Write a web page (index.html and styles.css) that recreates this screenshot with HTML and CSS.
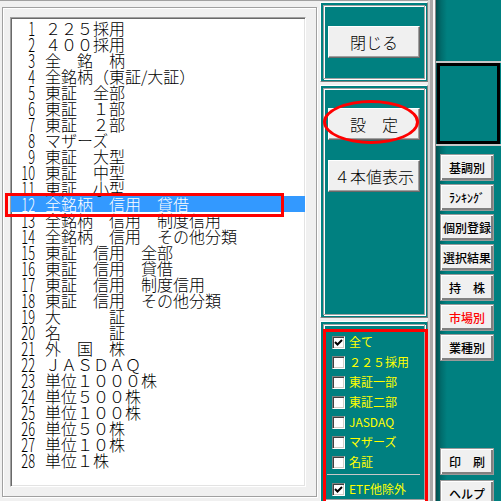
FILE: index.html
```html
<!DOCTYPE html>
<html lang="ja">
<head>
<meta charset="utf-8">
<link rel="stylesheet" href="styles.css">
</head>
<body>
<div class="window">
  <div class="left">
    <div class="frame">
      <ul class="list">
        <li><span class="n">1</span><span class="t">２２５採用</span></li>
        <li><span class="n">2</span><span class="t">４００採用</span></li>
        <li><span class="n">3</span><span class="t">全　銘　柄</span></li>
        <li><span class="n">4</span><span class="t">全銘柄（東証/大証）</span></li>
        <li><span class="n">5</span><span class="t">東証　全部</span></li>
        <li><span class="n">6</span><span class="t">東証　１部</span></li>
        <li><span class="n">7</span><span class="t">東証　２部</span></li>
        <li><span class="n">8</span><span class="t">マザーズ</span></li>
        <li><span class="n">9</span><span class="t">東証　大型</span></li>
        <li><span class="n">10</span><span class="t">東証　中型</span></li>
        <li><span class="n">11</span><span class="t">東証　小型</span></li>
        <li class="sel"><span class="n">12</span><span class="t">全銘柄　信用　貸借</span></li>
        <li><span class="n">13</span><span class="t">全銘柄　信用　制度信用</span></li>
        <li><span class="n">14</span><span class="t">全銘柄　信用　その他分類</span></li>
        <li><span class="n">15</span><span class="t">東証　信用　全部</span></li>
        <li><span class="n">16</span><span class="t">東証　信用　貸借</span></li>
        <li><span class="n">17</span><span class="t">東証　信用　制度信用</span></li>
        <li><span class="n">18</span><span class="t">東証　信用　その他分類</span></li>
        <li><span class="n">19</span><span class="t">大　　　証</span></li>
        <li><span class="n">20</span><span class="t">名　　　証</span></li>
        <li><span class="n">21</span><span class="t">外　国　株</span></li>
        <li><span class="n">22</span><span class="t">ＪＡＳＤＡＱ</span></li>
        <li><span class="n">23</span><span class="t">単位１０００株</span></li>
        <li><span class="n">24</span><span class="t">単位５００株</span></li>
        <li><span class="n">25</span><span class="t">単位１００株</span></li>
        <li><span class="n">26</span><span class="t">単位５０株</span></li>
        <li><span class="n">27</span><span class="t">単位１０株</span></li>
        <li><span class="n">28</span><span class="t">単位１株</span></li>
      </ul>
    </div>
  </div>

  <div class="mid">
    <div class="group g1">
      <div class="etch">
        <button class="btn b-close">閉じる</button>
      </div>
    </div>
    <div class="group g2">
      <div class="etch">
        <button class="btn b-set">設　定</button>
        <button class="btn b-four">４本値表示</button>
      </div>
    </div>
    <div class="group g3">
      <div class="etch">
        <div class="checks">
          <label class="chk"><span class="box on"><svg viewBox="0 0 11 11" width="11" height="11"><path d="M2 5 L4.5 7.5 L9 3" fill="none" stroke="#000" stroke-width="2"/></svg></span>全て</label>
          <label class="chk"><span class="box"></span>２２５採用</label>
          <label class="chk"><span class="box"></span>東証一部</label>
          <label class="chk"><span class="box"></span>東証二部</label>
          <label class="chk"><span class="box"></span>JASDAQ</label>
          <label class="chk"><span class="box"></span>マザーズ</label>
          <label class="chk"><span class="box"></span>名証</label>
          <div class="sep"></div>
          <label class="chk"><span class="box on"><svg viewBox="0 0 11 11" width="11" height="11"><path d="M2 5 L4.5 7.5 L9 3" fill="none" stroke="#000" stroke-width="2"/></svg></span>ETF他除外</label>
        </div>
      </div>
    </div>
  </div>

  <div class="divider"></div>

  <div class="right">
    <div class="r-top"></div>
    <div class="r-line"></div>
    <div class="r-box"></div>
    <div class="r-line"></div>
    <div class="sbtns">
      <button class="sbtn first">基調別</button>
      <button class="sbtn">ﾗﾝｷﾝｸﾞ</button>
      <button class="sbtn">個別登録</button>
      <button class="sbtn">選択結果</button>
      <button class="sbtn">持　株</button>
      <button class="sbtn red">市場別</button>
      <button class="sbtn">業種別</button>
      <button class="sbtn print">印　刷</button>
      <button class="sbtn help">ヘルプ</button>
    </div>
  </div>

  <div class="mark mark-row"></div>
  <div class="mark mark-oval"></div>
</div>
</body>
</html>
```

FILE: styles.css
```css
* {
  box-sizing: border-box;
  margin: 0;
  padding: 0;
}

html, body {
  width: 501px;
  height: 501px;
  overflow: hidden;
}

body {
  background: #f0f0f0;
  font-family: "Noto Sans CJK JP", sans-serif;
}

.window {
  position: relative;
  display: flex;
  width: 501px;
  height: 501px;
  overflow: hidden;
}

/* ---------- left list panel ---------- */
.left {
  width: 320px;
  flex: none;
  border-top: 1px solid #a0a0a0;
  padding: 6px 0 0 2px;
  background: #f0f0f0;
}

.frame {
  width: 315px;
  height: 490px;
  border: 1px solid #a0a0a0;
  box-shadow: inset 1px 1px 0 #fff, 1px 1px 0 #fff;
  padding: 9px 0 0 7px;
}

.list {
  list-style: none;
  width: 296px;
  height: 470px;
  background: #fff;
  border-style: solid;
  border-width: 1px;
  border-color: #a0a0a0 #fff #fff #a0a0a0;
  box-shadow: inset 1px 1px 0 #696969, inset -1px -1px 0 #e3e3e3;
  padding-top: 2px;
  font-size: 16px;
  font-weight: 300;
  line-height: 16px;
  color: #000;
}

.list li {
  display: flex;
  height: 16px;
  white-space: pre;
}

.list li.sel {
  background: #3399ff;
  color: #fff;
}

.n {
  display: inline-block;
  width: 24px;
  text-align: right;
  transform: scale(0.8, 1.15);
  transform-origin: right center;
}

.t {
  margin-left: 10px;
}

/* ---------- middle teal panel ---------- */
.mid {
  width: 108px;
  flex: none;
  border-top: 1px solid #a0a0a0;
  padding-top: 1px;
  display: flex;
  flex-direction: column;
  gap: 3px;
  background: #f0f0f0;
}

.group {
  background: #008080;
  border: 1px solid;
  border-color: #fff #808080 #808080 #fff;
  padding: 2px;
}

.g1 { height: 80px; flex: none; }
.g2 { height: 233px; flex: none; }
.g3 { flex: 1; }

.etch {
  height: 100%;
  border: 1px solid #a0a0a0;
  box-shadow: inset 1px 1px 0 #fff, 1px 1px 0 #fff;
}

.btn {
  display: block;
  width: 92px;
  height: 32px;
  margin-left: 4px;
  background: #f0f0f0;
  border: 1px solid;
  border-color: #fff #696969 #696969 #fff;
  box-shadow: inset -1px -1px 0 #a0a0a0;
  font-family: "Noto Sans CJK JP", sans-serif;
  font-size: 16px;
  font-weight: 300;
  line-height: 28px;
  color: #000;
  white-space: pre;
}

.b-close { margin-top: 20px; }
.b-set { margin-top: 19px; }
.b-four { margin-top: 20px; }

.checks {
  padding: 7px 0 0 8px;
}

.chk {
  display: flex;
  align-items: center;
  gap: 4px;
  height: 20px;
  color: #ffff00;
  font-size: 12px;
  line-height: 14px;
}

.box {
  display: flex;
  align-items: center;
  justify-content: center;
  width: 13px;
  height: 13px;
  flex: none;
  background: #fff;
  border: 1px solid;
  border-color: #808080 #fff #fff #808080;
  box-shadow: inset 1px 1px 0 #404040, inset -1px -1px 0 #d4d0c8;
}

.sep {
  height: 1px;
  margin: 2px 4px 4px -5px;
  background: #c8c8c8;
}

/* ---------- divider ---------- */
.divider {
  width: 8px;
  flex: none;
  background: linear-gradient(to right, #d4d4d4 0 2px, #a8a8a8 2px 5px, #f8f8f8 5px 7px, #8a8a8a 7px 8px);
}

/* ---------- right column ---------- */
.right {
  width: 65px;
  flex: none;
  display: flex;
  flex-direction: column;
  background: linear-gradient(to right, #005050 0, #006c6c 5px, #008080 11px);
}

.r-top { height: 61px; flex: none; }

.r-line {
  height: 2px;
  flex: none;
  background: #c8c8c8;
}

.r-box {
  width: 63px;
  height: 81px;
  flex: none;
  margin-left: 1px;
  border: 3px solid #000;
  background: #008080;
}

.sbtns {
  display: flex;
  flex-direction: column;
  padding-top: 5px;
}

.sbtn {
  width: 54px;
  height: 27px;
  flex: none;
  margin: 3px 0 0 4px;
  background: #f0f0f0;
  border: 1px solid #9a9a9a;
  box-shadow: inset 1px 1px 0 #fff, inset -2px -2px 0 #808080;
  font-family: "Noto Sans CJK JP", sans-serif;
  font-size: 12px;
  font-weight: 500;
  line-height: 22px;
  color: #000;
  white-space: pre;
}

.sbtn.red { color: #ff0000; }
.sbtn.print { margin-top: 87px; }
.sbtn.help { margin-top: 5px; }

/* ---------- red annotations ---------- */
.mark {
  position: absolute;
  border: 3px solid #ff0000;
  pointer-events: none;
}

.mark-row {
  left: 5px;
  top: 193px;
  width: 279px;
  height: 24px;
}

.mark-oval {
  left: 323px;
  top: 100px;
  width: 96px;
  height: 44px;
  border-radius: 50%;
}

.g3 .etch {
  position: relative;
}

.g3 .etch::after {
  content: "";
  position: absolute;
  left: -1px;
  top: 4px;
  width: 99px;
  height: 169px;
  border: 3px solid #ff0000;
}
```
